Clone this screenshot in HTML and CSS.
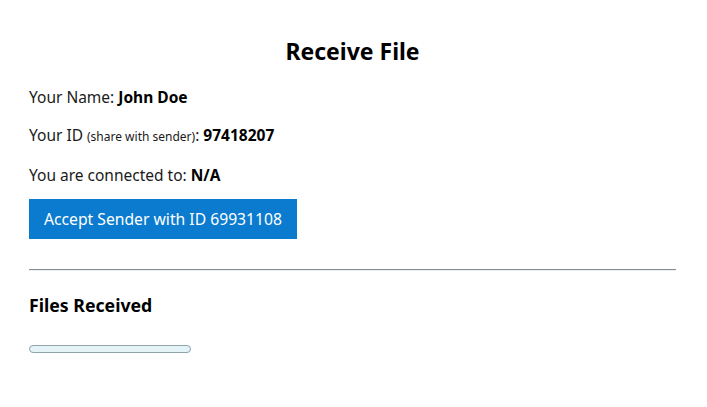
FILE: index.html
```html
<!DOCTYPE html>
<html>
<head>
<meta charset="utf-8">
<link rel="stylesheet" href="styles.css">
</head>
<body>
<div class="page">
  <h1 class="title">Receive File</h1>
  <p class="line">Your Name: <b>John Doe</b></p>
  <p class="line">Your ID <span class="small">(share with sender)</span>: <b>97418207</b></p>
  <p class="line last">You are connected to: <b>N/A</b></p>
  <button class="accept">Accept Sender with ID 69931108</button>
  <hr class="divider">
  <h2 class="sub">Files Received</h2>
  <div class="progress"></div>
</div>
</body>
</html>
```
FILE: styles.css
```css
html, body { margin: 0; padding: 0; background: #fff; }
body { font-family: "Noto Sans", "Open Sans", sans-serif; color: #1a1a1a; }
.page { padding: 35px 31px 0 29px; }
.title { margin: 0 0 19px; text-align: center; font-size: 23px; font-weight: 700; line-height: 32px; color: #000; }
.line { margin: 0 0 16px; font-size: 15.5px; line-height: 22px; }
.line.last { margin-bottom: 13px; }
.line b { font-weight: 700; color: #000; }
.small { font-size: 12px; }
.accept { display: block; margin: 0; height: 40px; padding: 0 15px; border: none; background: #0a7bcf; color: #fff; font-family: inherit; font-size: 15.7px; }
.divider { margin: 30px 0 0; border: none; border-top: 1px solid #8a8a8a; border-bottom: 1px solid #e6f2f5; height: 0; }
.sub { margin: 21px 0 0; font-size: 17.7px; font-weight: 700; line-height: 26px; color: #000; }
.progress { margin: 27px 0 0; width: 160px; height: 6px; border: 1px solid #8fa4ad; border-radius: 4px; background: #e4f3f8; }
```
